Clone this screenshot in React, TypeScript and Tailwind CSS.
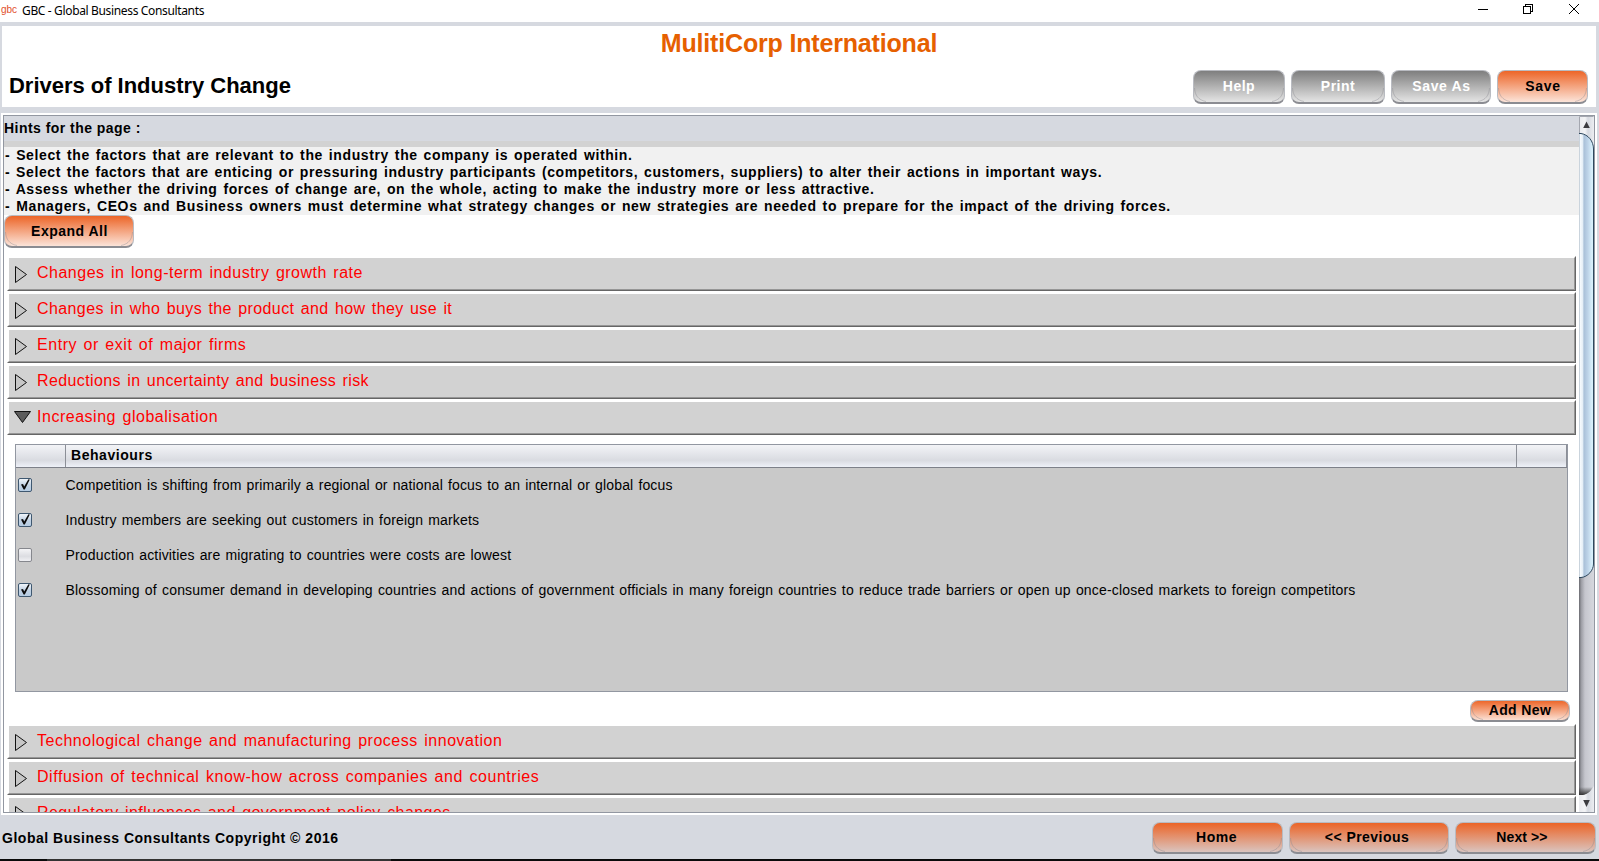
import { useState } from 'react';
import clsx from 'clsx';

type Behaviour = { label: string; checked: boolean; tracking: string };
type Driver = { title: string; tracking: string; open?: boolean };

const hints = [
  { text: '- Select the factors that are relevant to the industry the company is operated within.', tracking: 'tracking-[0.61px]' },
  { text: '- Select the factors that are enticing or pressuring industry participants (competitors, customers, suppliers) to alter their actions in important ways.', tracking: 'tracking-[0.585px]' },
  { text: '- Assess whether the driving forces of change are, on the whole, acting to make the industry more or less attractive.', tracking: 'tracking-[0.6px]' },
  { text: '- Managers, CEOs and Business owners must determine what strategy changes or new strategies are needed to prepare for the impact of the driving forces.', tracking: 'tracking-[0.62px]' },
];

const driversBefore: Driver[] = [
  { title: 'Changes in long-term industry growth rate', tracking: 'tracking-[0.5px]' },
  { title: 'Changes in who buys the product and how they use it', tracking: 'tracking-[0.4px]' },
  { title: 'Entry or exit of major firms', tracking: 'tracking-[0.54px]' },
  { title: 'Reductions in uncertainty and business risk', tracking: 'tracking-[0.39px]' },
  { title: 'Increasing globalisation', tracking: 'tracking-[0.52px]', open: true },
];

const driversAfter: Driver[] = [
  { title: 'Technological change and manufacturing process innovation', tracking: 'tracking-[0.51px]' },
  { title: 'Diffusion of technical know-how across companies and countries', tracking: 'tracking-[0.55px]' },
  { title: 'Regulatory influences and government policy changes', tracking: 'tracking-[0.43px]' },
];

const initialBehaviours: Behaviour[] = [
  {
    label: 'Competition is shifting from primarily a regional or national focus to an internal or global focus',
    checked: true,
    tracking: 'tracking-[0.15px]',
  },
  { label: 'Industry members are seeking out customers in foreign markets', checked: true, tracking: 'tracking-[0.17px]' },
  { label: 'Production activities are migrating to countries were costs are lowest', checked: false, tracking: 'tracking-[0.17px]' },
  {
    label:
      'Blossoming of consumer demand in developing countries and actions of government officials in many foreign countries to reduce trade barriers or open up once-closed markets to foreign competitors',
    checked: true,
    tracking: 'tracking-[0.19px]',
  },
];

function GlossButton({ label, className, grey }: { label: string; className: string; grey?: boolean }) {
  return (
    <button
      className={clsx(
        'relative flex shrink-0 items-center justify-center overflow-hidden rounded-[8px] border-[1.5px] border-[#b9bbc1] border-b-2 border-b-[#8b8c92] bg-linear-to-b bg-origin-border pb-px text-sm font-bold',
        grey ? 'from-[#7b7b7b] to-[#7b7b7b]/15 text-white' : 'from-[#ec6122] to-[#ec6122]/12 text-black',
        className,
      )}
    >
      {/* curved highlights in the two lower corners */}
      <svg className="absolute bottom-0 left-0" width="12" height="14" fill="none">
        <path d="M0.5 0C1 7 4 12 12 13.5" stroke="#8a8a92" strokeOpacity="0.4" />
      </svg>
      <svg className="absolute right-0 bottom-0" width="12" height="14" fill="none">
        <path d="M11.5 0C11 7 8 12 0 13.5" stroke="#8a8a92" strokeOpacity="0.4" />
      </svg>
      <span className="relative">{label}</span>
    </button>
  );
}

function DriverBar({ title, tracking, open }: Driver) {
  return (
    <div className="mx-[3px] mb-px h-[35px] shrink-0 border border-white border-r-[#666] border-b-[#666]">
      <div className="flex h-full border border-white border-r-[#969696] border-b-[#969696] bg-[#d2d2d2] pl-[5px]">
        <svg className="mt-[7px] shrink-0" width="23" height="20">
          {open ? (
            <path d="M0.5 2.5H16.5L8.5 13.5Z" fill="#5c5c5c" stroke="#111" />
          ) : (
            <path d="M1.5 1.5V17.5L12.5 9.5Z" fill="#c6c6c6" stroke="#111" />
          )}
        </svg>
        <span className={clsx('mt-[3px] text-base/6 whitespace-nowrap text-[#ff0000] [word-spacing:1.5px]', tracking)}>{title}</span>
      </div>
    </div>
  );
}

function CheckBox({ checked }: { checked: boolean }) {
  return (
    <svg width="14" height="14" className="shrink-0">
      <defs>
        <linearGradient id="chk-on" x1="0" y1="0" x2="0" y2="1">
          <stop offset="0" stopColor="#f4f8fc" />
          <stop offset="0.5" stopColor="#c3d3e4" />
          <stop offset="1" stopColor="#b4cbe2" />
        </linearGradient>
        <linearGradient id="chk-off" x1="0" y1="0" x2="0" y2="1">
          <stop offset="0" stopColor="#f6f6f8" />
          <stop offset="0.6" stopColor="#dcdde2" />
          <stop offset="1" stopColor="#f2f2f5" />
        </linearGradient>
      </defs>
      <rect
        x="0.5"
        y="0.5"
        width="13"
        height="13"
        rx="1.5"
        fill={checked ? 'url(#chk-on)' : 'url(#chk-off)'}
        stroke={checked ? '#3f5870' : '#85878d'}
      />
      {checked && <path d="M3 6.6L5 6L6.2 8.6L10.4 1.2L11.8 1.4L6.8 11.4L5.6 11.4Z" fill="#0b0b0b" />}
    </svg>
  );
}

function ScrollBar() {
  return (
    <svg width="15" height="696" className="shrink-0">
      <defs>
        <linearGradient id="sb-track">
          <stop offset="0" stopColor="#6a6a70" />
          <stop offset="0.15" stopColor="#9c9da4" />
          <stop offset="0.4" stopColor="#c5c6cd" />
          <stop offset="1" stopColor="#d6d8de" />
        </linearGradient>
        <linearGradient id="sb-thumb">
          <stop offset="0" stopColor="#b4c0cc" />
          <stop offset="0.1" stopColor="#f4f9fd" />
          <stop offset="0.26" stopColor="#e4eef6" />
          <stop offset="0.34" stopColor="#a9c0d8" />
          <stop offset="0.6" stopColor="#bdd3e8" />
          <stop offset="0.9" stopColor="#d8f0fb" />
          <stop offset="1" stopColor="#d8f0fb" />
        </linearGradient>
        <linearGradient id="sb-btn">
          <stop offset="0" stopColor="#e9eaee" />
          <stop offset="0.4" stopColor="#f3f4f6" />
          <stop offset="0.6" stopColor="#d6d9e0" />
          <stop offset="1" stopColor="#eceef1" />
        </linearGradient>
        <linearGradient id="sb-fade" x1="0" y1="0" x2="0" y2="1">
          <stop offset="0" stopColor="#333" stopOpacity="0" />
          <stop offset="1" stopColor="#333" />
        </linearGradient>
      </defs>
      <rect width="15" height="696" fill="url(#sb-track)" />
      {/* up arrow */}
      <rect width="15" height="34" fill="url(#sb-btn)" />
      <path d="M0.5 17V0.5H14.5" fill="none" stroke="#a4a7b0" />
      <path d="M7.5 5.5L10.8 12H4.2Z" fill="#3c3c40" />
      {/* thumb */}
      <path d="M0 17.5H2C9 18.5 14.5 25 14.5 33V448C14.5 454 9 461 2 461.5H0Z" fill="url(#sb-thumb)" />
      <path d="M0 17.5H2C9 18.5 14.5 25 14.5 33V448C14.5 454 9 461 2 461.5H0" fill="none" stroke="#2e485e" />
      {/* down arrow */}
      <path d="M0 671H14C12 675 9 678.5 4 679H0Z" fill="url(#sb-fade)" />
      <path d="M0 679H4C9 678.5 12 675 15 670V696H0Z" fill="url(#sb-btn)" />
      <path d="M4.2 684H10.8L7.5 691Z" fill="#3c3c40" />
    </svg>
  );
}

function BehaviourTable() {
  const [rows, setRows] = useState(initialBehaviours);

  const toggle = (index: number) =>
    setRows(rows.map((row, i) => (i === index ? { ...row, checked: !row.checked } : row)));

  return (
    <div className="mx-[11px] mt-2 h-[248px] shrink-0 border border-[#9297a1] bg-[#c9c9c9]">
      <div className="flex h-[23px] border-b border-[#7d8089] bg-linear-to-b from-[#f3f4f7] via-[#d9dbe1] via-70% to-[#eef1f8] text-sm font-bold">
        <div className="w-[50px] border-r border-[#8c8f97]" />
        <div className="flex-1 border-r border-[#8c8f97] pl-[5px] leading-[21px] tracking-[0.55px]">Behaviours</div>
        <div className="w-[50px] border-r border-[#8c8f97]" />
      </div>
      {rows.map((row, i) => (
        <div key={row.label} className="flex h-[35px] items-center pb-0.5 pl-0.5" onClick={() => toggle(i)}>
          <CheckBox checked={row.checked} />
          <span className={clsx('ml-[33.5px] text-sm whitespace-nowrap text-black [word-spacing:1px]', row.tracking)}>{row.label}</span>
        </div>
      ))}
    </div>
  );
}

export default function App() {
  return (
    <div className="flex h-[861px] w-full flex-col overflow-hidden bg-[#d6d9e0] font-['Liberation_Sans',Arial,sans-serif] text-black">
      {/* Window title bar */}
      <div className="flex h-[22px] shrink-0 items-start bg-white">
        <span className="w-[22px] pl-px text-[10px] leading-[19px] tracking-[-0.1px] text-[#e2502c]">gbc</span>
        <span className="flex-1 font-['Noto_Sans','Open_Sans',sans-serif] text-xs leading-[21px] tracking-[-0.35px]">GBC - Global Business Consultants</span>
        <svg width="131" height="22" fill="none" stroke="#000" shapeRendering="crispEdges">
          <path d="M10 9.5H20" />
          <path d="M55.5 6.5H62.5V13.5H55.5ZM57.5 6.5V4.5H64.5V11.5H62.5" />
          <path d="M101 4L111 14M111 4L101 14" />
        </svg>
      </div>

      {/* Page header */}
      <div className="mt-1 mr-[3px] ml-0.5 flex h-[81px] shrink-0 flex-col bg-white">
        <div className="h-11 text-center text-[25px] leading-[35px] font-bold tracking-[-0.17px] text-[#e66000]">MulitiCorp International</div>
        <div className="flex gap-1.5 pr-2 pl-[7px]">
          <h1 className="mt-[-1px] flex-1 text-[22px] leading-[33px] font-bold tracking-[-0.02px]">Drivers of Industry Change</h1>
          <GlossButton label="Help" grey className="h-[34px] w-[92px] tracking-[0.5px]" />
          <GlossButton label="Print" grey className="h-[34px] w-[94px] tracking-[0.5px]" />
          <GlossButton label="Save As" grey className="h-[34px] w-[100px] pl-px tracking-[0.65px]" />
          <GlossButton label="Save" className="h-[34px] w-[91px] pl-px tracking-[0.65px]" />
        </div>
      </div>

      {/* Scroll pane */}
      <div className="mt-1.5 mr-0.5 ml-px h-[702px] shrink-0 bg-white p-0.5">
        <div className="flex h-[698px] border border-[#9297a1]">
          <div className="flex min-w-0 flex-1 flex-col overflow-hidden bg-white">
            <div className="h-[25px] shrink-0 bg-[#d6d9e0] text-sm leading-[25px] font-bold tracking-[0.46px]">Hints for the page :</div>
            <div className="h-1.5 shrink-0 bg-[#d2d2d2]" />
            <div className="h-[68px] shrink-0 bg-[#f1f1f1] pl-px text-sm leading-[17px] font-bold whitespace-nowrap [word-spacing:1.4px]">
              {hints.map((hint) => (
                <div key={hint.text} className={hint.tracking}>
                  {hint.text}
                </div>
              ))}
            </div>
            <GlossButton label="Expand All" className="mb-2 h-[33px] w-[130px] pl-px tracking-[0.5px]" />

            {driversBefore.map((driver) => (
              <DriverBar key={driver.title} {...driver} />
            ))}
            <BehaviourTable />
            <div className="mt-2 mr-[9px] mb-0.5 flex shrink-0 justify-end">
              <GlossButton label="Add New" className="h-[22px] w-[100px] tracking-[0.4px]" />
            </div>
            {driversAfter.map((driver) => (
              <DriverBar key={driver.title} {...driver} />
            ))}
          </div>
          <ScrollBar />
        </div>
      </div>

      {/* Footer */}
      <div className="flex h-11 shrink-0 items-center gap-1.5 pt-0.5 pr-[3px] pl-0.5">
        <span className="flex-1 text-sm font-bold tracking-[0.52px]">Global Business Consultants Copyright © 2016</span>
        <GlossButton label="Home" className="h-8 w-[131px] pr-0.5 tracking-[0.5px]" />
        <GlossButton label="<< Previous" className="h-8 w-[160px] pr-1 tracking-[0.45px]" />
        <GlossButton label="Next >>" className="h-8 w-[141px] pr-[7px] tracking-[0.1px]" />
      </div>
      <div className="flex h-0.5 shrink-0 bg-[#0a0a0a]">
        <div className="ml-[47px] w-[344px] bg-[#333]" />
      </div>
    </div>
  );
}
